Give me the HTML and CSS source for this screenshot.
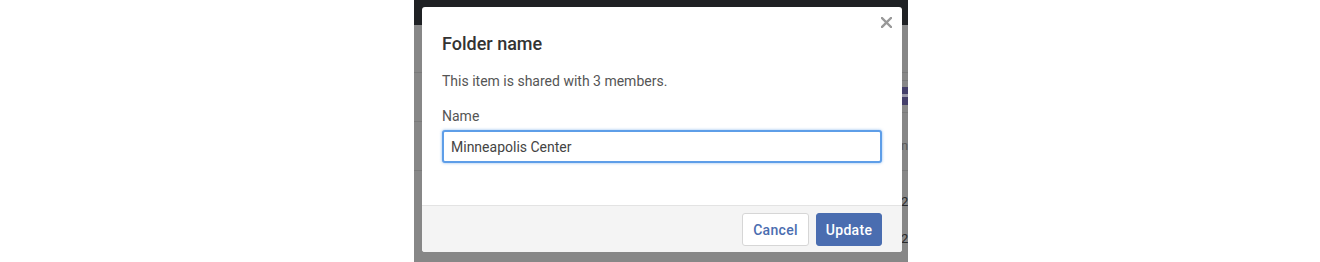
FILE: index.html
```html
<!DOCTYPE html>
<html>

<head>
    <meta charset="utf-8">
    <title>Folder name</title>
    <link rel="stylesheet" href="styles.css">
</head>

<body>
    <div id="stage">
        <div class="app">
            <div class="topbar"></div>
            <div class="header"></div>
            <div class="main">
                <div class="side">
                    <div class="side-row"></div>
                    <div class="side-row"></div>
                </div>
                <div class="content">
                    <div class="subbar"></div>
                    <div class="toolbar">
                        <span class="tool-btn"></span>
                    </div>
                    <div class="list-head">n</div>
                    <div class="list-row">2</div>
                    <div class="list-row">2</div>
                </div>
            </div>
        </div>

        <div class="overlay">
            <div class="modal">
                <button class="close" aria-label="Close">
                    <svg width="11" height="11" viewBox="0 0 11 11">
                        <path d="M1 1 L10 10 M10 1 L1 10" stroke="#999" stroke-width="2.4" stroke-linecap="square" />
                    </svg>
                </button>

                <div class="modal-body">
                    <h4 class="title">Folder name</h4>
                    <p class="info">This item is shared with 3 members.</p>
                    <label class="label" for="folder">Name</label>
                    <input id="folder" class="field" type="text" value="Minneapolis Center">
                </div>

                <div class="modal-footer">
                    <button class="btn btn-default">Cancel</button>
                    <button class="btn btn-primary">Update</button>
                </div>
            </div>
        </div>
    </div>
</body>

</html>
```

FILE: styles.css
```css
:root {
    --blue: #4a6db0;
    --text: #333;
    --muted: #555;
    --shade: #878787;
    --shade-line: #7a7a7a;
}

* {
    box-sizing: border-box;
}

body {
    margin: 0;
    background: #fff;
    font-family: Roboto, "Liberation Sans", sans-serif;
    color: var(--text);
}

#stage {
    width: 494px;
    height: 262px;
    margin-left: 414px;
    position: relative;
    overflow: hidden;
}

/* the page behind the dialog, already dimmed */
.app {
    height: 100%;
    background: var(--shade);
    display: flex;
    flex-direction: column;
}

.topbar {
    height: 25px;
    flex-shrink: 0;
    background: #1f2124;
}

.header {
    height: 48px;
    flex-shrink: 0;
    border-bottom: 1px solid var(--shade-line);
}

.main {
    flex: 1;
    display: flex;
}

.side {
    width: 200px;
    flex-shrink: 0;
}

.side-row {
    height: 49px;
    border-bottom: 1px solid var(--shade-line);
}

.content {
    flex: 1;
    min-width: 0;
}

.subbar {
    height: 8px;
    border-bottom: 1px solid var(--shade-line);
}

.toolbar {
    height: 32px;
    border-bottom: 1px solid var(--shade-line);
    display: flex;
    justify-content: flex-end;
    padding-top: 6px;
}

.tool-btn {
    width: 30px;
    height: 18px;
    background: #443f6a;
    position: relative;
}

.tool-btn::after {
    content: "";
    position: absolute;
    right: 0;
    top: 7px;
    width: 6px;
    height: 3px;
    background: #9a98a8;
}

.list-head,
.list-row {
    padding-left: 287px;
    font-size: 13px;
    line-height: 20px;
    white-space: nowrap;
}

.list-head {
    height: 58px;
    padding-top: 23px;
    border-bottom: 1px solid var(--shade-line);
    color: #5a5a5a;
}

.list-row {
    height: 20px;
    margin-top: 17px;
    color: #2a2a2a;
}

.list-head + .list-row {
    margin-top: 21px;
}

.overlay {
    position: absolute;
    top: 0;
    left: 0;
    right: 0;
    bottom: 0;
    padding: 7px 6px 0 8px;
}

.modal {
    position: relative;
    background: #fff;
    border-radius: 3px;
    height: 245px;
    display: flex;
    flex-direction: column;
    overflow: hidden;
}

.close {
    position: absolute;
    top: 10px;
    right: 10px;
    border: none;
    background: none;
    padding: 0;
    width: 11px;
    height: 11px;
    line-height: 0;
}

.modal-body {
    flex: 1;
    padding: 27px 20px 0;
}

.title {
    margin: 0;
    font-size: 18px;
    font-weight: 500;
    line-height: 20px;
    color: #333;
}

.info {
    margin: 17px 0 0;
    font-size: 14px;
    line-height: 20px;
    color: var(--muted);
}

.label {
    display: block;
    margin-top: 15px;
    font-size: 14px;
    line-height: 20px;
    color: var(--muted);
}

.field {
    display: block;
    width: 100%;
    height: 33px;
    margin-top: 4px;
    padding: 0 7px;
    border: 2px solid #5e9ee8;
    border-radius: 3px;
    box-shadow: 0 0 3px rgba(94, 158, 232, 0.7);
    font-family: inherit;
    font-size: 14px;
    color: #444;
    outline: none;
}

.modal-footer {
    height: 47px;
    background: #f4f4f4;
    border-top: 1px solid #e3e3e3;
    display: flex;
    justify-content: flex-end;
    align-items: flex-start;
    gap: 7px;
    padding: 7px 20px 0;
}

.btn {
    height: 33px;
    width: 66px;
    border-radius: 3px;
    font-family: inherit;
    font-size: 14px;
    font-weight: 500;
    letter-spacing: 0.3px;
}

.btn-default {
    width: 67px;
    background: #fff;
    border: 1px solid #d6d6d6;
    color: var(--blue);
}

.btn-primary {
    background: var(--blue);
    border: 1px solid var(--blue);
    color: #fff;
}
```
